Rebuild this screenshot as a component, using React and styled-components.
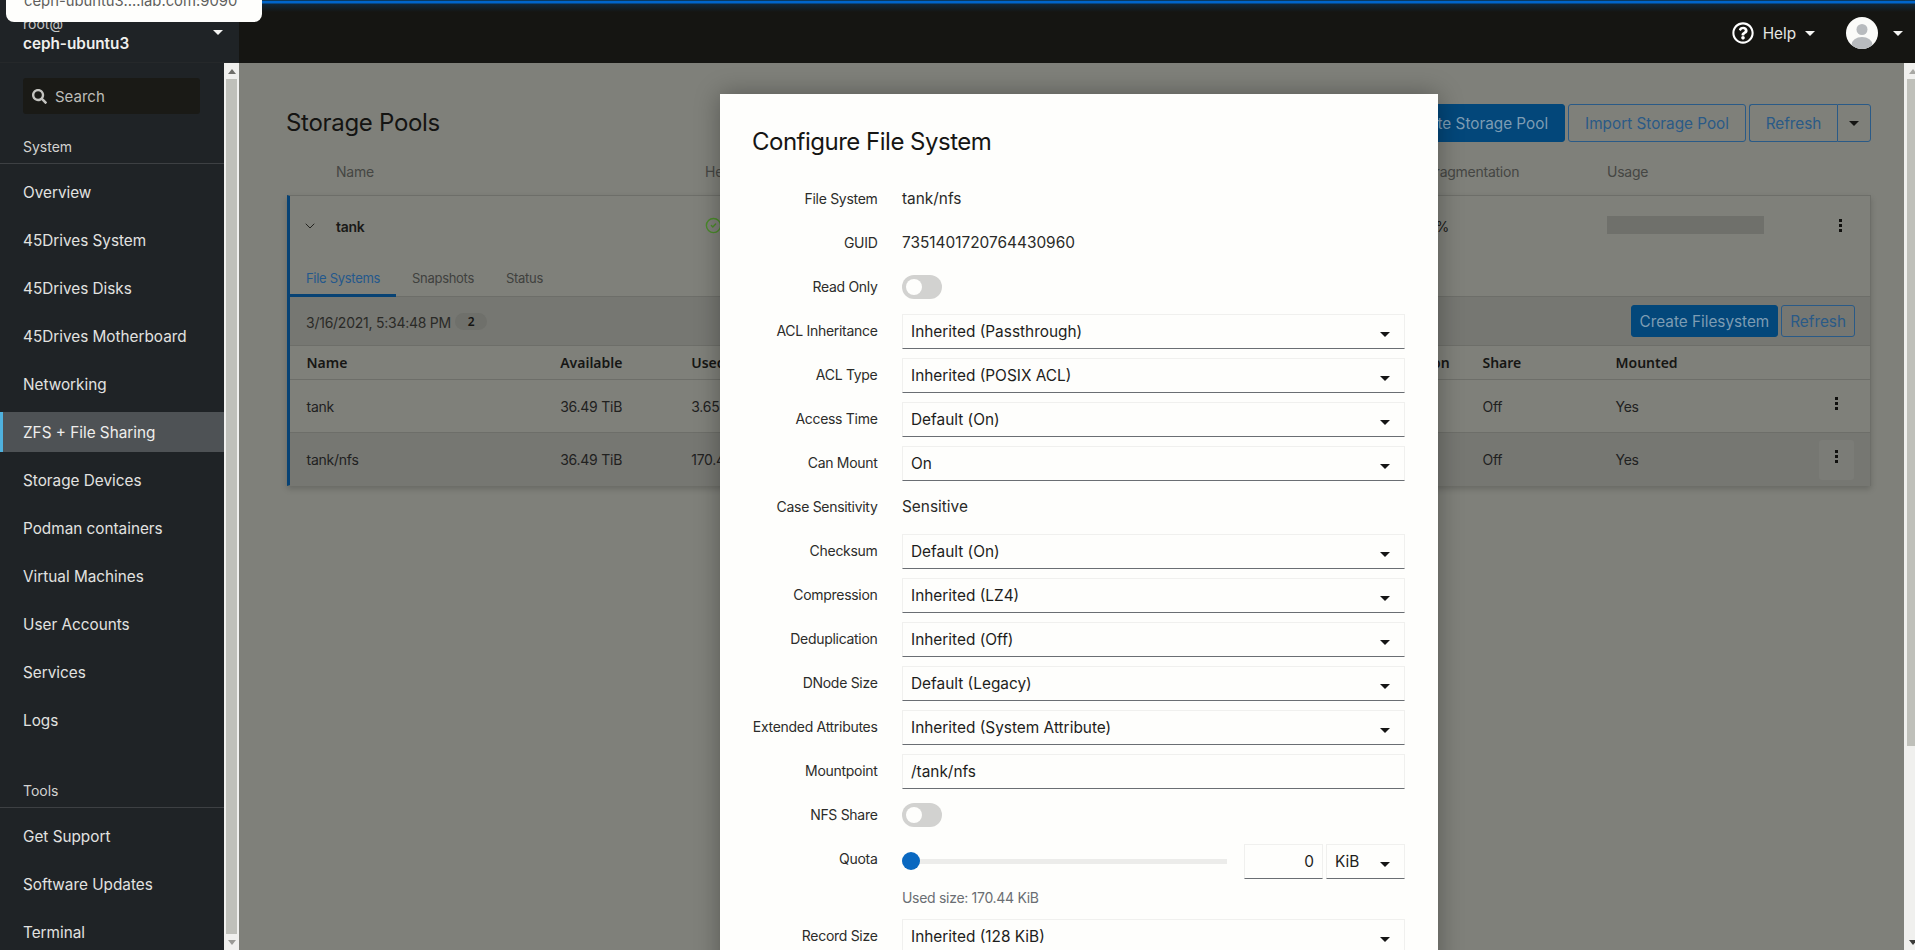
import React from 'react';
import styled, { createGlobalStyle, css } from 'styled-components';
import { FaRegQuestionCircle, FaSearch } from 'react-icons/fa';
import { CircleCheck, ChevronDown } from 'lucide-react';

const UI = `Inter, "Noto Sans", sans-serif`;
const TABLE = `"Noto Sans", "Open Sans", sans-serif`;

const Global = createGlobalStyle`
  html, body { margin: 0; padding: 0; height: 100%; overflow: hidden; background: #151512; }
  * { box-sizing: border-box; }
  #root { height: 100%; }
`;

const Shell = styled.div`
  display: flex;
  width: 1915px;
  height: 950px;
  overflow: hidden;
  position: relative;
  font-family: ${UI};
`;

const Caret = styled.span`
  display: inline-block;
  width: 0;
  height: 0;
  flex: none;
  border-left: 5px solid transparent;
  border-right: 5px solid transparent;
  border-top: 5px solid ${p => p.$color || '#151515'};
`;
const Arrow = styled.span`
  width: 0;
  height: 0;
  border-left: 4px solid transparent;
  border-right: 4px solid transparent;
  ${p => (p.$down ? `border-top: 5px solid ${p.$color};` : `border-bottom: 5px solid ${p.$color};`)}
`;

const Tip = styled.div`
  position: absolute;
  left: 6px;
  top: 0;
  width: 256px;
  height: 22px;
  background: #fefefc;
  border-radius: 0 0 8px 8px;
  overflow: hidden;
  z-index: 5;
  padding-left: 18px;
  font-size: 14.8px;
  line-height: 16px;
  color: #5f5f5c;
  white-space: nowrap;
  span { display: block; margin-top: -7px; }
`;

const Sidebar = styled.aside`
  width: 239px;
  flex: none;
  display: flex;
  flex-direction: column;
  background: #1f2326;
  color: #e4e4e2;
`;
const HostHeader = styled.div`
  height: 63px;
  flex: none;
  position: relative;
  padding: 15px 0 0 23px;
  border-bottom: 1px solid #25282a;
`;
const HostUser = styled.div`
  font-size: 14px;
  line-height: 18px;
  color: #c8c8c6;
`;
const HostName = styled.div`
  font-size: 15.3px;
  font-weight: 600;
  line-height: 22px;
  color: #f0f0ee;
`;
const HostCaret = styled.span`
  position: absolute;
  left: 213px;
  top: 30px;
  display: flex;
`;
const SideBody = styled.div`
  flex: 1;
  display: flex;
  min-height: 0;
`;
const Nav = styled.nav`
  flex: 1;
  min-width: 0;
  padding-top: 15px;
`;
const SearchBox = styled.div`
  margin: 0 24px 0 23px;
  height: 36px;
  display: flex;
  align-items: center;
  gap: 8px;
  padding-left: 9px;
  background: #1a1a16;
  border-radius: 3px;
  color: #bdbdb9;
  font-size: 15px;
`;
const NavLabel = styled.div`
  height: 50px;
  padding: 24px 0 0 23px;
  font-size: 14px;
  line-height: 18px;
  color: #d2d2d0;
  border-bottom: 1px solid #3d4043;
  margin-top: ${p => p.$top || 0}px;
`;
const NavList = styled.div`
  display: flex;
  flex-direction: column;
  gap: 8px;
  padding-top: 8px;
`;
const NavItem = styled.a`
  height: 40px;
  display: flex;
  align-items: center;
  padding-left: 23px;
  font-size: 15.3px;
  color: #e2e2e0;
  ${p => p.$active && css`
    background: #4e5255;
    box-shadow: inset 3px 0 0 #4fb1de;
    color: #eeeeec;
  `}
`;
const ScrollTrack = styled.div`
  flex: none;
  width: ${p => p.$w}px;
  background: #f0f0ee;
  display: flex;
  flex-direction: column;
  align-items: ${p => (p.$cut ? 'flex-start' : 'center')};
  padding-left: ${p => (p.$cut ? 3 : 0)}px;
`;
const ScrollEnd = styled.div`
  height: 16px;
  width: 11px;
  flex: none;
  display: flex;
  align-items: center;
  justify-content: center;
`;
const ScrollThumb = styled.div`
  width: 11px;
  ${p => (p.$h ? `height: ${p.$h}px;` : 'flex: 1;')}
  background: #bfc0ba;
`;
const ScrollGap = styled.div`
  flex: 1;
`;

const Right = styled.div`
  flex: 1;
  min-width: 0;
  display: flex;
  flex-direction: column;
`;
const TopBar = styled.header`
  height: 63px;
  flex: none;
  display: flex;
  align-items: center;
  justify-content: flex-end;
  padding: 3px 12px 0 0;
  background: linear-gradient(#0a3a60 0, #0a3a60 1px, #0066cc 1px, #0066cc 3px, #10283a 4px, #151512 12px);
  color: #e6e6e3;
  font-size: 15.3px;
`;
const HelpLink = styled.div`
  display: flex;
  align-items: center;
  gap: 9px;
  margin-right: 31px;
`;
const UserMenu = styled.div`
  display: flex;
  align-items: center;
  gap: 15px;
`;
const Avatar = styled.svg`
  width: 32px;
  height: 32px;
  display: block;
`;
const Under = styled.div`
  flex: 1;
  min-height: 0;
  display: flex;
`;
const Page = styled.main`
  flex: 1;
  min-width: 0;
  position: relative;
  overflow: hidden;
  background: #7f807a;
  padding: 41px 33px 0 48px;
  color: #191917;
  letter-spacing: -0.25px;
`;

const PageHead = styled.div`
  display: flex;
  align-items: center;
  justify-content: space-between;
  height: 38px;
`;
const PageTitle = styled.h1`
  margin: 0 0 2px -1px;
  font-size: 24px;
  font-weight: 400;
  letter-spacing: -0.3px;
  color: #141412;
`;
const HeadActions = styled.div`
  display: flex;
  align-items: center;
  gap: 3px;
`;
const Btn = styled.button`
  font: inherit;
  font-size: 15.3px;
  letter-spacing: 0;
  height: ${p => (p.$small ? 32 : 38)}px;
  padding: 0 ${p => (p.$small ? 8 : 16)}px;
  border-radius: 3px;
  display: flex;
  align-items: center;
  ${p => (p.$primary
    ? css`background: #03477a; border: 1px solid #03477a; color: #7d9cb3;`
    : css`background: transparent; border: 1px solid #2a5a87; color: #2a5a87;`)}
`;
const SplitGroup = styled.div`
  display: flex;
`;
const SplitLeft = styled(Btn)`
  border-radius: 3px 0 0 3px;
  border-right: 0;
  width: 88px;
  padding: 0;
  justify-content: center;
`;
const SplitRight = styled(Btn)`
  border-radius: 0 3px 3px 0;
  width: 34px;
  padding: 0;
  justify-content: center;
`;

const poolCols = css`
  display: grid;
  grid-template-columns: 369px 722px 180px 1fr;
  align-items: center;
`;
const PoolHead = styled.div`
  ${poolCols}
  height: 53px;
  padding: 6px 0 0 49px;
  font-size: 14px;
  color: #454643;
`;
const Card = styled.section`
  border: 1px solid #6d6e69;
  border-left: 3px solid #074274;
  box-shadow: 0 3px 6px rgba(0, 0, 0, 0.18);
  height: 291px;
`;
const PoolRow = styled.div`
  ${poolCols}
  height: 60px;
  padding-left: 46px;
  position: relative;
  font-size: 14px;
  svg.health { margin-top: -2px; }
`;
const PoolName = styled.strong`
  font-weight: 600;
  font-size: 14px;
`;
const Expand = styled.span`
  position: absolute;
  left: 12px;
  top: 22px;
  display: flex;
  color: #23231f;
`;
const UsageBar = styled.div`
  width: 157px;
  height: 18px;
  background: #6f706b;
  margin-top: -3px;
`;
const Kebab = styled.span`
  display: flex;
  flex-direction: column;
  gap: 2px;
  align-items: center;
  i {
    display: block;
    width: 3px;
    height: 3px;
    background: #11110f;
  }
`;
const PoolKebab = styled.span`
  position: absolute;
  right: 28px;
  top: 23px;
`;
const Tabs = styled.div`
  height: 41px;
  display: flex;
  border-bottom: 1px solid #6d6e69;
`;
const Tab = styled.div`
  padding: 13px 16px 0;
  height: 41px;
  font-size: 13px;
  letter-spacing: -0.3px;
  line-height: 18px;
  color: ${p => (p.$active ? '#24588c' : '#40413e')};
  ${p => p.$active && 'box-shadow: inset 0 -3px 0 #074274;'}
`;
const FsToolbar = styled.div`
  height: 49px;
  background: #767772;
  border-bottom: 1px solid #6d6e69;
  display: flex;
  align-items: center;
  padding: 0 15px 0 16px;
  font-size: 14px;
`;
const Stamp = styled.span`
  color: #2a2a27;
  margin-top: 2px;
`;
const Badge = styled.span`
  margin-left: 4px;
  width: 32px;
  height: 17px;
  border-radius: 9px;
  background: #6f706b;
  color: #141412;
  font-size: 12px;
  font-weight: 600;
  display: flex;
  align-items: center;
  justify-content: center;
  font-family: ${TABLE};
`;
const ToolActions = styled.div`
  margin-left: auto;
  display: flex;
  gap: 3px;
`;
const fsCols = css`
  display: grid;
  grid-template-columns: 253.7px 131px 669.3px 122px 133px 1fr 51px;
  align-items: center;
  padding-left: 16.5px;
`;
const FsHead = styled.div`
  ${fsCols}
  height: 34px;
  font-family: ${TABLE};
  font-weight: 600;
  font-size: 14px;
  letter-spacing: 0;
  color: #161614;
  border-bottom: 1px solid #6d6e69;
`;
const FsRow = styled.div`
  ${fsCols}
  height: ${p => p.$h}px;
  font-size: 14px;
  color: #21211f;
  ${p => p.$hover && 'background: #767772;'}
  ${p => p.$line && 'border-bottom: 1px solid #6d6e69;'}
`;
const KebabBox = styled.div`
  width: 35px;
  height: 40px;
  border-radius: 3px;
  display: flex;
  align-items: center;
  justify-content: center;
  padding-bottom: 6px;
  background: ${p => (p.$hover ? '#7b7c77' : 'transparent')};
`;

const Modal = styled.div`
  position: absolute;
  left: 481px;
  top: 31px;
  width: 718px;
  height: 1200px;
  background: #fefefc;
  box-shadow: 0 0 24px rgba(3, 3, 3, 0.32);
  padding: 23px 33px 0 32px;
  color: #161614;
  letter-spacing: 0;
`;
const ModalTitle = styled.h2`
  margin: 0;
  height: 64px;
  font-size: 24px;
  line-height: 50px;
  font-weight: 400;
  letter-spacing: -0.5px;
`;
const Form = styled.div`
  display: grid;
  grid-template-columns: 125.5px 1fr;
  grid-template-rows: repeat(16, 36px) 25px 36px;
  column-gap: 24.5px;
  row-gap: 8px;
  align-items: center;
`;
const Label = styled.label`
  font-size: 14px;
  letter-spacing: -0.3px;
  text-align: right;
  color: #2c2c2a;
  white-space: nowrap;
  margin-top: -1px;
`;
const Value = styled.div`
  font-size: 15.4px;
  color: #2a2a28;
  margin-top: -1px;
`;
const Switch = styled.span`
  width: 40px;
  height: 24px;
  border-radius: 12px;
  background: #d2d2d0;
  display: flex;
  align-items: center;
  padding-left: 4px;
  &::before {
    content: '';
    width: 16px;
    height: 16px;
    border-radius: 50%;
    background: #fefefc;
  }
`;
const fieldBox = css`
  height: 35px;
  background: #fefefc;
  border: 1px solid #f0f0ee;
  border-bottom-color: #6a6e73;
  font-size: 15.4px;
  color: #1d1d1b;
  display: flex;
  align-items: center;
`;
const Select = styled.div`
  ${fieldBox}
  padding: 0 14px 0 8px;
  justify-content: space-between;
  span:last-child { margin-top: 7px; }
`;
const TextField = styled.div`
  ${fieldBox}
  padding: 0 8px;
`;
const QuotaRow = styled.div`
  display: flex;
  align-items: center;
  height: 36px;
  margin-top: 4px;
`;
const Track = styled.div`
  width: 325px;
  height: 5px;
  background: #ececea;
  position: relative;
  margin-right: 17px;
`;
const Thumb = styled.span`
  position: absolute;
  left: 0;
  top: -7px;
  width: 18px;
  height: 18px;
  border-radius: 50%;
  background: #0a68c0;
`;
const NumField = styled(TextField)`
  width: 79px;
  justify-content: flex-end;
  margin-right: 3px;
`;
const UnitSelect = styled(Select)`
  flex: 1;
`;
const Hint = styled.div`
  grid-column: 2;
  font-size: 14px;
  letter-spacing: -0.3px;
  color: #6a6e73;
`;
const Blank = styled.div``;

const navTop = ['Overview', '45Drives System', '45Drives Disks', '45Drives Motherboard', 'Networking', 'ZFS + File Sharing', 'Storage Devices', 'Podman containers', 'Virtual Machines', 'User Accounts', 'Services', 'Logs'];
const navTools = ['Get Support', 'Software Updates', 'Terminal'];

const KebabIcon = () => <Kebab><i /><i /><i /></Kebab>;

const SelectField = ({ children }) => (
  <Select><span>{children}</span><Caret /></Select>
);

export default function App() {
  return (
    <>
      <Global />
      <Shell>
        <Tip><span>ceph-ubuntu3....lab.com:9090</span></Tip>
        <Sidebar>
          <HostHeader>
            <HostUser>root@</HostUser>
            <HostName>ceph-ubuntu3</HostName>
            <HostCaret><Caret $color="#f5f5f3" /></HostCaret>
          </HostHeader>
          <SideBody>
            <Nav>
              <SearchBox><FaSearch size={15} color="#c4c4c0" /> Search</SearchBox>
              <NavLabel>System</NavLabel>
              <NavList>
                {navTop.map(n => <NavItem key={n} $active={n.startsWith('ZFS')}>{n}</NavItem>)}
              </NavList>
              <NavLabel $top={18}>Tools</NavLabel>
              <NavList>
                {navTools.map(n => <NavItem key={n}>{n}</NavItem>)}
              </NavList>
            </Nav>
            <ScrollTrack $w={15}>
              <ScrollEnd><Arrow $color="#6e6e6a" /></ScrollEnd>
              <ScrollThumb />
              <ScrollEnd><Arrow $down $color="#9a9a96" /></ScrollEnd>
            </ScrollTrack>
          </SideBody>
        </Sidebar>
        <Right>
          <TopBar>
            <HelpLink>
              <FaRegQuestionCircle size={22} color="#fff" />
              Help
              <Caret $color="#f5f5f3" />
            </HelpLink>
            <UserMenu>
              <Avatar viewBox="0 0 32 32">
                <defs><clipPath id="av"><circle cx="16" cy="16" r="16" /></clipPath></defs>
                <circle cx="16" cy="16" r="16" fill="#fbfbf9" />
                <g clipPath="url(#av)" fill="#b8bbbe">
                  <circle cx="16" cy="12.5" r="5.5" />
                  <ellipse cx="16" cy="28" rx="10.5" ry="8" />
                </g>
              </Avatar>
              <Caret $color="#f5f5f3" />
            </UserMenu>
          </TopBar>
          <Under>
            <Page>
              <PageHead>
                <PageTitle>Storage Pools</PageTitle>
                <HeadActions>
                  <Btn $primary>Create Storage Pool</Btn>
                  <Btn>Import Storage Pool</Btn>
                  <SplitGroup>
                    <SplitLeft>Refresh</SplitLeft>
                    <SplitRight><Caret $color="#141412" /></SplitRight>
                  </SplitGroup>
                </HeadActions>
              </PageHead>
              <PoolHead>
                <span>Name</span>
                <span>Health</span>
                <span>Fragmentation</span>
                <span>Usage</span>
              </PoolHead>
              <Card>
                <PoolRow>
                  <Expand><ChevronDown size={16} strokeWidth={1.5} /></Expand>
                  <PoolName>tank</PoolName>
                  <CircleCheck className="health" size={17} color="#4a8a2a" strokeWidth={2} />
                  <span>0%</span>
                  <UsageBar />
                  <PoolKebab><KebabIcon /></PoolKebab>
                </PoolRow>
                <Tabs>
                  <Tab $active>File Systems</Tab>
                  <Tab>Snapshots</Tab>
                  <Tab>Status</Tab>
                </Tabs>
                <FsToolbar>
                  <Stamp>3/16/2021, 5:34:48 PM</Stamp>
                  <Badge>2</Badge>
                  <ToolActions>
                    <Btn $primary $small>Create Filesystem</Btn>
                    <Btn $small>Refresh</Btn>
                  </ToolActions>
                </FsToolbar>
                <FsHead>
                  <span>Name</span><span>Available</span><span>Used</span><span>Compression</span><span>Share</span><span>Mounted</span><span />
                </FsHead>
                <FsRow $h={53} $line>
                  <span>tank</span><span>36.49 TiB</span><span>3.65 TiB</span><span /><span>Off</span><span>Yes</span>
                  <KebabBox><KebabIcon /></KebabBox>
                </FsRow>
                <FsRow $h={53} $hover>
                  <span>tank/nfs</span><span>36.49 TiB</span><span>170.44 KiB</span><span /><span>Off</span><span>Yes</span>
                  <KebabBox $hover><KebabIcon /></KebabBox>
                </FsRow>
              </Card>
              <Modal>
                <ModalTitle>Configure File System</ModalTitle>
                <Form>
                  <Label>File System</Label><Value>tank/nfs</Value>
                  <Label>GUID</Label><Value>7351401720764430960</Value>
                  <Label>Read Only</Label><Switch />
                  <Label>ACL Inheritance</Label><SelectField>Inherited (Passthrough)</SelectField>
                  <Label>ACL Type</Label><SelectField>Inherited (POSIX ACL)</SelectField>
                  <Label>Access Time</Label><SelectField>Default (On)</SelectField>
                  <Label>Can Mount</Label><SelectField>On</SelectField>
                  <Label>Case Sensitivity</Label><Value>Sensitive</Value>
                  <Label>Checksum</Label><SelectField>Default (On)</SelectField>
                  <Label>Compression</Label><SelectField>Inherited (LZ4)</SelectField>
                  <Label>Deduplication</Label><SelectField>Inherited (Off)</SelectField>
                  <Label>DNode Size</Label><SelectField>Default (Legacy)</SelectField>
                  <Label>Extended Attributes</Label><SelectField>Inherited (System Attribute)</SelectField>
                  <Label>Mountpoint</Label><TextField>/tank/nfs</TextField>
                  <Label>NFS Share</Label><Switch />
                  <Label>Quota</Label>
                  <QuotaRow>
                    <Track><Thumb /></Track>
                    <NumField>0</NumField>
                    <UnitSelect><span>KiB</span><Caret /></UnitSelect>
                  </QuotaRow>
                  <Blank /><Hint>Used size: 170.44 KiB</Hint>
                  <Label>Record Size</Label><SelectField>Inherited (128 KiB)</SelectField>
                </Form>
              </Modal>
            </Page>
            <ScrollTrack $w={11} $cut>
              <ScrollEnd><Arrow $color="#a8a8a4" /></ScrollEnd>
              <ScrollThumb $h={667} />
              <ScrollGap />
              <ScrollEnd><Arrow $down $color="#3c3c3a" /></ScrollEnd>
            </ScrollTrack>
          </Under>
        </Right>
      </Shell>
    </>
  );
}
